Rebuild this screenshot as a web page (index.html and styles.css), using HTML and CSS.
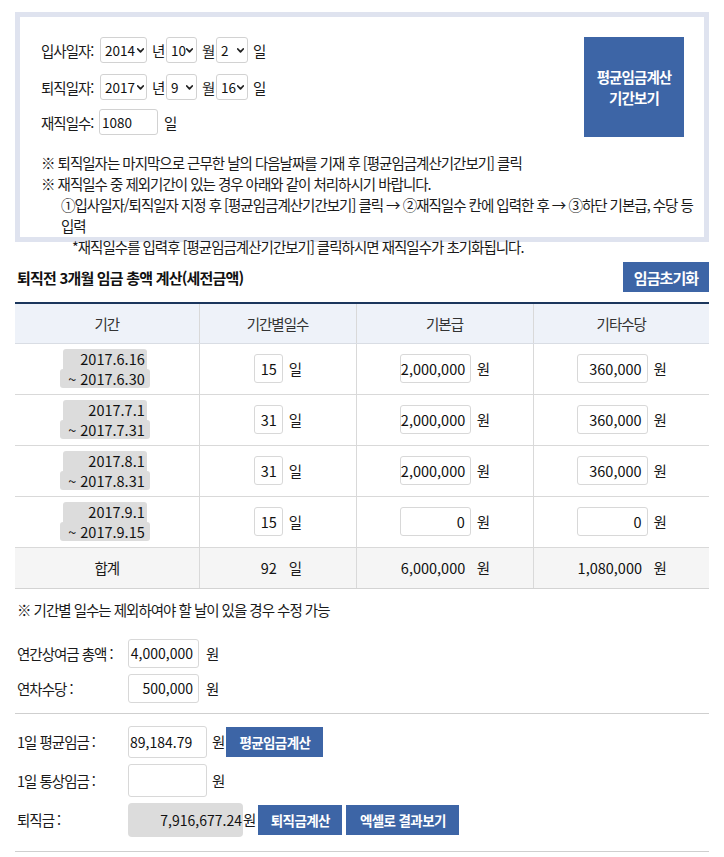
FILE: index.html
```html
<!DOCTYPE html>
<html lang="ko">
<head>
<meta charset="utf-8">
<title>퇴직금 계산</title>
<link rel="stylesheet" href="styles.css">
</head>
<body>
<div class="page">
  <section class="period-box">
    <div class="period-top">
      <div class="date-fields">
        <div class="field-row">
          <span class="label">입사일자:</span>
          <span class="select sel-year"><span>2014</span><svg class="chev" width="7" height="5" viewBox="0 0 7 5"><polyline points="0.8,1 3.5,3.8 6.2,1"/></svg></span>
          <span class="unit">년</span>
          <span class="select sel-month"><span>10</span><svg class="chev" width="7" height="5" viewBox="0 0 7 5"><polyline points="0.8,1 3.5,3.8 6.2,1"/></svg></span>
          <span class="unit">월</span>
          <span class="select sel-day"><span>2</span><svg class="chev" width="7" height="5" viewBox="0 0 7 5"><polyline points="0.8,1 3.5,3.8 6.2,1"/></svg></span>
          <span class="unit">일</span>
        </div>
        <div class="field-row">
          <span class="label">퇴직일자:</span>
          <span class="select sel-year"><span>2017</span><svg class="chev" width="7" height="5" viewBox="0 0 7 5"><polyline points="0.8,1 3.5,3.8 6.2,1"/></svg></span>
          <span class="unit">년</span>
          <span class="select sel-month"><span>9</span><svg class="chev" width="7" height="5" viewBox="0 0 7 5"><polyline points="0.8,1 3.5,3.8 6.2,1"/></svg></span>
          <span class="unit">월</span>
          <span class="select sel-day"><span>16</span><svg class="chev" width="7" height="5" viewBox="0 0 7 5"><polyline points="0.8,1 3.5,3.8 6.2,1"/></svg></span>
          <span class="unit">일</span>
        </div>
        <div class="field-row days">
          <span class="label">재직일수:</span>
          <span class="days-input">1080</span>
          <span class="unit unit-days">일</span>
        </div>
      </div>
      <button class="btn btn-big">평균임금계산<br>기간보기</button>
    </div>
    <div class="notes">
      <p>※ 퇴직일자는 마지막으로 근무한 날의 다음날짜를 기재 후 [평균임금계산기간보기] 클릭</p>
      <p>※ 재직일수 중 제외기간이 있는 경우 아래와 같이 처리하시기 바랍니다.</p>
      <p class="step">①입사일자/퇴직일자 지정 후 [평균임금계산기간보기] 클릭 → ②재직일수 칸에 입력한 후 → ③하단 기본급, 수당 등<br>입력</p>
      <p class="sub">*재직일수를 입력후 [평균임금계산기간보기] 클릭하시면 재직일수가 초기화됩니다.</p>
    </div>
  </section>

  <div class="section-head">
    <h2>퇴직전 3개월 임금 총액 계산(세전금액)</h2>
    <button class="btn btn-reset">임금초기화</button>
  </div>

  <table class="wage-table">
    <colgroup>
      <col class="c1"><col class="c2"><col class="c3"><col class="c4">
    </colgroup>
    <thead>
      <tr><th>기간</th><th>기간별일수</th><th>기본급</th><th>기타수당</th></tr>
    </thead>
    <tbody>
      <tr>
        <td><span class="period"><span class="p1">2017.6.16</span><span class="p2">~ 2017.6.30</span></span></td>
        <td><span class="cell"><span class="nbox w29">15</span><span>일</span></span></td>
        <td><span class="cell"><span class="nbox w71">2,000,000</span><span>원</span></span></td>
        <td><span class="cell"><span class="nbox w71">360,000</span><span>원</span></span></td>
      </tr>
      <tr>
        <td><span class="period"><span class="p1">2017.7.1</span><span class="p2">~ 2017.7.31</span></span></td>
        <td><span class="cell"><span class="nbox w29">31</span><span>일</span></span></td>
        <td><span class="cell"><span class="nbox w71">2,000,000</span><span>원</span></span></td>
        <td><span class="cell"><span class="nbox w71">360,000</span><span>원</span></span></td>
      </tr>
      <tr>
        <td><span class="period"><span class="p1">2017.8.1</span><span class="p2">~ 2017.8.31</span></span></td>
        <td><span class="cell"><span class="nbox w29">31</span><span>일</span></span></td>
        <td><span class="cell"><span class="nbox w71">2,000,000</span><span>원</span></span></td>
        <td><span class="cell"><span class="nbox w71">360,000</span><span>원</span></span></td>
      </tr>
      <tr>
        <td><span class="period"><span class="p1">2017.9.1</span><span class="p2">~ 2017.9.15</span></span></td>
        <td><span class="cell"><span class="nbox w29">15</span><span>일</span></span></td>
        <td><span class="cell"><span class="nbox w71">0</span><span>원</span></span></td>
        <td><span class="cell"><span class="nbox w71">0</span><span>원</span></span></td>
      </tr>
      <tr class="total">
        <td>합계</td>
        <td><span class="cell"><span class="nbox w29 plain">92</span><span>일</span></span></td>
        <td><span class="cell"><span class="nbox w71 plain">6,000,000</span><span>원</span></span></td>
        <td><span class="cell"><span class="nbox w71 plain">1,080,000</span><span>원</span></span></td>
      </tr>
    </tbody>
  </table>

  <p class="hint">※ 기간별 일수는 제외하여야 할 날이 있을 경우 수정 가능</p>

  <div class="calc">
    <div class="calc-row r-a">
      <span class="calc-label">연간상여금 총액 :</span>
      <span class="ibox w70">4,000,000</span>
      <span class="won">원</span>
    </div>
    <div class="calc-row r-b">
      <span class="calc-label">연차수당 :</span>
      <span class="ibox w70">500,000</span>
      <span class="won">원</span>
    </div>
    <hr class="divider">
    <div class="calc-row r-c">
      <span class="calc-label">1일 평균임금 :</span>
      <span class="ibox w79 left">89,184.79</span>
      <span class="won won-gap">원</span>
      <button class="btn btn-sm b-avg">평균임금계산</button>
    </div>
    <div class="calc-row r-d">
      <span class="calc-label">1일 통상임금 :</span>
      <span class="ibox w79"></span>
      <span class="won won-gap">원</span>
    </div>
    <div class="calc-row r-e">
      <span class="calc-label">퇴직금 :</span>
      <span class="ibox result">7,916,677.24</span>
      <span class="won won-tight">원</span>
      <button class="btn btn-sm b-sev">퇴직금계산</button>
      <button class="btn btn-sm b-xls">엑셀로 결과보기</button>
    </div>
    <hr class="divider bottom">
  </div>
</div>
</body>
</html>
```

FILE: styles.css
```css
* {
  box-sizing: border-box;
}

body {
  margin: 0;
  background: #fff;
  color: #1a1a1a;
  font-family: "Noto Sans CJK KR", "Noto Sans", sans-serif;
  font-size: 14.5px;
  letter-spacing: -1px;
}

.page {
  padding: 12px 15px 0;
}

/* ---------- period box ---------- */
.period-box {
  height: 230px;
  border: 5px solid #dfe3ef;
  padding: 20px 20px 0 21px;
}

.period-top {
  display: flex;
  justify-content: space-between;
  align-items: flex-start;
}

.date-fields {
  display: flex;
  flex-direction: column;
  gap: 11px;
}

.field-row {
  display: flex;
  align-items: center;
  height: 26px;
}

.field-row.days {
  margin-top: -2px;
}

.label {
  width: 59px;
  flex: none;
}

.select {
  display: inline-flex;
  align-items: center;
  justify-content: space-between;
  height: 26px;
  padding: 0 2px 0 4px;
  border: 1px solid #d2d2d2;
  border-radius: 3px;
  background: #fff;
  font-size: 13.5px;
  letter-spacing: 0;
  color: #111;
}

.sel-year { width: 47px; }
.sel-month { width: 31px; padding-right: 3px; }
.sel-day { width: 32px; padding-right: 3px; }

.chev {
  flex: none;
}

.chev polyline {
  fill: none;
  stroke: #222;
  stroke-width: 1.8;
  stroke-linecap: round;
  stroke-linejoin: round;
}

.unit {
  display: inline-block;
  width: 13px;
  margin: 0 1px 0 5px;
}

.days-input {
  display: inline-flex;
  align-items: center;
  width: 59px;
  height: 26px;
  margin-left: -1px;
  padding-left: 2px;
  border: 1px solid #d2d2d2;
  border-radius: 3px;
  font-size: 13.5px;
  letter-spacing: 0;
  color: #111;
}

.unit-days {
  margin-left: 6px;
}

.btn {
  border: 0;
  padding: 0;
  background: #3d65a6;
  color: #fff;
  font-family: inherit;
  font-weight: 700;
  font-size: 14.5px;
  letter-spacing: -0.9px;
  cursor: pointer;
}

.btn-big {
  width: 100px;
  height: 100px;
  line-height: 21px;
}

.notes {
  margin-top: 15px;
}

.notes p {
  margin: 0;
  line-height: 21px;
}

.notes .step {
  padding-left: 20px;
  white-space: nowrap;
}

.notes .sub {
  padding-left: 31px;
}

/* ---------- section head ---------- */
.section-head {
  display: flex;
  justify-content: space-between;
  align-items: center;
  height: 30px;
  margin-top: 20px;
}

.section-head h2 {
  margin: 0;
  padding-left: 2px;
  font-size: 15px;
  font-weight: 700;
  letter-spacing: -0.8px;
  color: #111;
}

.btn-reset {
  width: 86px;
  height: 30px;
  font-size: 15px;
}

/* ---------- table ---------- */
.wage-table {
  width: 100%;
  margin-top: 10px;
  border-collapse: collapse;
  table-layout: fixed;
  border-top: 2px solid #1b365d;
}

.c1 { width: 184px; }
.c2 { width: 157px; }
.c3 { width: 177px; }
.c4 { width: 176px; }

.wage-table th {
  height: 40px;
  padding: 0;
  background: #eef2f9;
  color: #333;
  font-weight: 400;
  border-bottom: 1px solid #d9dde4;
}

.wage-table th + th,
.wage-table td + td {
  border-left: 1px solid #d9d9d9;
}

.wage-table td {
  height: 51px;
  padding: 0;
  text-align: center;
  border-bottom: 1px solid #d9d9d9;
}

.wage-table tr.total td {
  height: 41px;
  background: #f5f5f5;
  border-top: 1px solid #1b365d;
  border-bottom: 1px solid #d3d3d3;
}

.period {
  display: inline-flex;
  flex-direction: column;
  align-items: flex-end;
  margin-right: 4px;
  vertical-align: middle;
}

.period span {
  display: block;
  height: 19.5px;
  line-height: 19.5px;
  background: #dcdcdc;
  text-align: right;
  font-size: 14.5px;
  letter-spacing: 0;
  color: #111;
}

.period .p1 {
  width: 84px;
  margin-right: 3px;
  padding-right: 2px;
  border-radius: 3px 3px 0 0;
}

.period .p2 {
  width: 90px;
  padding-right: 5px;
  border-radius: 3px;
}

.cell {
  display: inline-flex;
  align-items: center;
  gap: 6px;
  vertical-align: middle;
}

.nbox {
  display: inline-block;
  height: 29px;
  line-height: 27px;
  padding-right: 5px;
  border: 1px solid #d8d8d8;
  border-radius: 3px;
  background: #fff;
  text-align: right;
  font-size: 14.5px;
  letter-spacing: 0;
  color: #111;
}

.nbox.plain {
  border-color: transparent;
  background: transparent;
}

.w29 { width: 29px; }
.w71 { width: 71px; }

.hint {
  margin: 11px 0 0;
  padding-left: 2px;
  line-height: 20px;
}

/* ---------- calc ---------- */
.calc {
  margin-top: 19px;
}

.calc-row {
  display: flex;
  align-items: center;
  padding-left: 2px;
}

.calc-label {
  width: 111px;
  flex: none;
}

.ibox {
  display: inline-flex;
  align-items: center;
  justify-content: flex-end;
  height: 29px;
  padding-right: 5px;
  border: 1px solid #d8d8d8;
  border-radius: 3px;
  background: #fff;
  font-size: 14px;
  letter-spacing: 0;
  color: #111;
}

.w70 { width: 71px; }
.w79 { width: 79px; }

.ibox.left {
  justify-content: flex-start;
  padding-left: 1px;
}

.ibox.result {
  width: 115px;
  height: 34px;
  padding-right: 1px;
  border: 0;
  border-radius: 4px;
  background: #dcdcdc;
}

.r-b { margin-top: 6px; }
.r-c { margin-top: 12px; }
.r-c .ibox { height: 32px; }
.r-d { margin-top: 6px; }
.r-d .ibox { height: 33px; }
.r-e { margin-top: 6px; }

.won {
  margin-left: 7px;
}

.won-gap {
  margin-left: 5px;
}

.won-tight {
  margin-left: 0;
}

.btn-sm {
  height: 30px;
  font-size: 13.5px;
  letter-spacing: -0.6px;
}

.b-avg {
  width: 97px;
  margin-left: 2px;
}

.b-sev {
  width: 84px;
  margin-left: 3px;
}

.b-xls {
  width: 113px;
  margin-left: 4px;
}

.divider {
  height: 1px;
  margin: 10px 0 0;
  border: 0;
  background: #cfcfcf;
}

.divider.bottom {
  margin-top: 14px;
}
```
